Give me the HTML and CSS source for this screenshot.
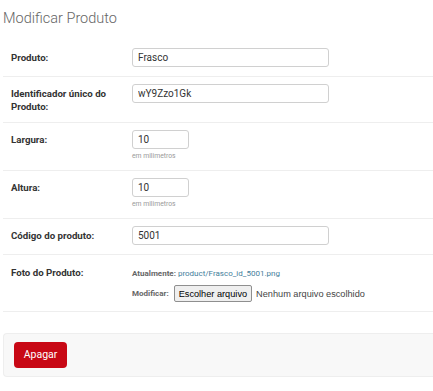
FILE: index.html
```html
<!DOCTYPE html>
<html lang="pt-br">
<head>
    <meta charset="UTF-8">
    <meta name="viewport" content="width=device-width, initial-scale=1.0">
    <title>Modificar Produto</title>
    <link rel="stylesheet" href="styles.css">
</head>
<body>
    <div class="content">
        <h1 class="page-title">Modificar Produto</h1>

        <form class="change-form">
            <div class="module">
                <div class="form-row">
                    <label for="id_name">Produto:</label>
                    <div class="field">
                        <input type="text" id="id_name" class="text-field" value="Frasco">
                    </div>
                </div>

                <div class="form-row">
                    <label for="id_uid">Identificador único do Produto:</label>
                    <div class="field">
                        <input type="text" id="id_uid" class="text-field" value="wY9Zzo1Gk">
                    </div>
                </div>

                <div class="form-row with-help">
                    <label for="id_width">Largura:</label>
                    <div class="field">
                        <input type="text" id="id_width" class="number-field" value="10">
                        <div class="help">em milimetros</div>
                    </div>
                </div>

                <div class="form-row with-help">
                    <label for="id_height">Altura:</label>
                    <div class="field">
                        <input type="text" id="id_height" class="number-field" value="10">
                        <div class="help">em milimetros</div>
                    </div>
                </div>

                <div class="form-row">
                    <label for="id_code">Código do produto:</label>
                    <div class="field">
                        <input type="text" id="id_code" class="text-field" value="5001">
                    </div>
                </div>

                <div class="form-row file-row">
                    <label for="id_photo">Foto do Produto:</label>
                    <div class="field file-upload">
                        <div class="file-current">
                            <span class="file-caption">Atualmente:</span> <a href="#">product/Frasco_id_5001.png</a>
                        </div>
                        <div class="file-line">
                            <span class="file-caption">Modificar:</span>
                            <button type="button" class="file-button" id="id_photo">Escolher arquivo</button>
                            <span class="file-status">Nenhum arquivo escolhido</span>
                        </div>
                    </div>
                </div>
            </div>

            <div class="submit-row">
                <a href="#" class="delete-link">Apagar</a>
            </div>
        </form>
    </div>
</body>
</html>
```

FILE: styles.css
```css
body {
    margin: 0;
    font-family: Roboto, "Liberation Sans", sans-serif;
    color: #333;
    background-color: #fff;
}
.content {
    padding: 0 0 0 3px;
}
.page-title {
    margin: 0 0 13px;
    padding: 10px 0 0;
    font-size: 14.5px;
    line-height: 18px;
    font-weight: 300;
    color: #666;
}
.form-row {
    display: flex;
    align-items: baseline;
    padding: 7px 10px 9px 8px;
    border-bottom: 1px solid #eee;
}
.form-row label {
    flex: 0 0 111px;
    padding-right: 10px;
    font-size: 9.7px;
    line-height: 12.5px;
    font-weight: 700;
    color: #333;
}
.field {
    font-size: 10px;
    line-height: 13px;
}
.field input {
    display: block;
    box-sizing: border-box;
    height: 19px;
    margin: 0;
    padding: 0 5px;
    border: 1px solid #d0d0d0;
    border-radius: 3px;
    font-family: Roboto, "Liberation Sans", sans-serif;
    font-size: 10px;
    color: #333;
    background-color: #fff;
}
.text-field {
    width: 197px;
}
.number-field {
    width: 57px;
}
.help {
    margin-top: 3px;
    font-size: 6.8px;
    line-height: 9px;
    color: #999;
}
.file-row {
    padding-top: 12px;
}
.file-upload {
    font-size: 8px;
    line-height: 10px;
}
.file-line {
    display: flex;
    align-items: center;
    gap: 4px;
    margin-top: 6px;
}
.file-caption {
    font-weight: 700;
    color: #666;
}
.file-upload a {
    color: #447e9b;
    text-decoration: none;
}
.file-button {
    height: 17px;
    padding: 0 4px;
    margin: 0 0 0 1px;
    border: 1px solid #8f8f8f;
    border-radius: 2px;
    background-color: #efefef;
    font-family: "Liberation Sans", Arial, sans-serif;
    font-size: 9.2px;
    color: #000;
}
.file-status {
    font-family: "Liberation Sans", Arial, sans-serif;
    font-size: 9.2px;
    color: #444;
}
.submit-row {
    display: flex;
    margin-top: 21px;
    padding: 8px 10px;
    border: 1px solid #eee;
    border-right: none;
    border-radius: 4px 0 0 4px;
    background-color: #f8f8f8;
}
.delete-link {
    display: block;
    width: 53px;
    height: 26px;
    line-height: 26px;
    text-align: center;
    border-radius: 4px;
    background-color: #c80815;
    color: #fff;
    font-size: 10.5px;
    text-decoration: none;
}
```
